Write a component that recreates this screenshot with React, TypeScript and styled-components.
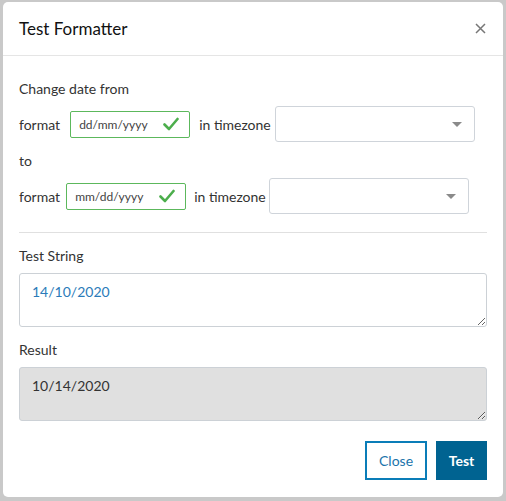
import React from "react";
import styled, { createGlobalStyle } from "styled-components";

const Global = createGlobalStyle`
  html, body { margin: 0; padding: 0; }
  body { font-family: Lato, "Open Sans", sans-serif; color: #333; background: #c9c9c9; }
  * { box-sizing: border-box; }
`;

const Backdrop = styled.div`
  width: 506px;
  height: 501px;
  background: #c9c9c9;
  padding: 2px 3px 4px 3px;
  overflow: hidden;
`;

const Modal = styled.div`
  width: 500px;
  height: 495px;
  background: #fff;
  border-radius: 5px;
  display: flex;
  flex-direction: column;
`;

const Header = styled.div`
  height: 54px;
  display: flex;
  align-items: center;
  justify-content: space-between;
  padding: 0 16px 0 16px;
  border-bottom: 1px solid #e5e5e5;
`;

const Title = styled.h4`
  margin: 0;
  font-size: 17px;
  font-weight: 400;
  color: #111;
`;

const CloseX = styled.button`
  border: 0;
  background: none;
  padding: 0;
  width: 14px;
  height: 14px;
  display: flex;
  align-items: center;
  justify-content: center;
  cursor: pointer;
`;

const Body = styled.div`
  padding: 23px 16px 0 16px;
  display: flex;
  flex-direction: column;
`;

const Text = styled.div<{ $mt?: number }>`
  font-size: 14px;
  line-height: 20px;
  margin-top: ${(p) => p.$mt ?? 0}px;
`;

const Row = styled.div<{ $mt: number }>`
  display: flex;
  align-items: center;
  height: 36px;
  margin-top: ${(p) => p.$mt}px;
  font-size: 14px;
`;

const Label = styled.span<{ $ml?: number }>`
  margin-left: ${(p) => p.$ml ?? 0}px;
  white-space: nowrap;
`;

const FormatInput = styled.div<{ $ml: number }>`
  margin-left: ${(p) => p.$ml}px;
  width: 120px;
  height: 27px;
  border: 1px solid #5cb85c;
  border-radius: 2px;
  display: flex;
  align-items: center;
  justify-content: space-between;
  padding: 0 10px 0 8px;
  font-size: 12px;
  color: #444;
`;

const Select = styled.div<{ $ml: number }>`
  margin-left: ${(p) => p.$ml}px;
  width: 200px;
  height: 36px;
  border: 1px solid #cfd4da;
  border-radius: 3px;
  display: flex;
  align-items: center;
  justify-content: flex-end;
  padding-right: 12px;
`;

const Caret = styled.span`
  width: 0;
  height: 0;
  border-left: 5px solid transparent;
  border-right: 5px solid transparent;
  border-top: 5px solid #8a8a8a;
`;

const Divider = styled.hr`
  margin: 18px 0 0 0;
  border: 0;
  border-top: 1px solid #e0e0e0;
  width: 468px;
`;

const Area = styled.textarea<{ $readOnly?: boolean }>`
  margin-top: 7px;
  width: 468px;
  height: 54px;
  border: 1px solid #ccd1d6;
  border-radius: 3px;
  padding: 8px 12px;
  font-family: Lato, sans-serif;
  font-size: 14px;
  line-height: 20px;
  color: ${(p) => (p.$readOnly ? "#333" : "#2b7bb9")};
  background: ${(p) => (p.$readOnly ? "#e0e0e0" : "#fff")};
  outline: none;
  display: block;
`;

const Footer = styled.div`
  display: flex;
  justify-content: flex-end;
  gap: 9px;
  padding: 20px 16px 0 0;
`;

const Button = styled.button<{ $primary?: boolean }>`
  height: 39px;
  padding: 0 12px;
  font-family: Lato, sans-serif;
  font-size: 14px;
  font-weight: ${(p) => (p.$primary ? 700 : 400)};
  border-radius: 0;
  cursor: pointer;
  border: ${(p) => (p.$primary ? "0" : "2px solid #0a7db8")};
  color: ${(p) => (p.$primary ? "#fff" : "#1a74ab")};
  background: ${(p) => (p.$primary ? "#006391" : "#fff")};
  width: ${(p) => (p.$primary ? 51 : 62)}px;
`;

const Check = () => (
  <svg width="16" height="14" viewBox="0 0 16 14">
    <path d="M1.5 7.5 L6 12 L14.5 2" fill="none" stroke="#4cae4c" strokeWidth="2.6" strokeLinecap="round" strokeLinejoin="round" />
  </svg>
);

export default function App() {
  return (
    <>
      <Global />
      <Backdrop>
        <Modal>
          <Header>
            <Title>Test Formatter</Title>
            <CloseX aria-label="Close">
              <svg width="11" height="11" viewBox="0 0 11 11">
                <path d="M1 1 L10 10 M10 1 L1 10" stroke="#777" strokeWidth="1.5" />
              </svg>
            </CloseX>
          </Header>
          <Body>
            <Text>Change date from</Text>
            <Row $mt={7}>
              <Label>format</Label>
              <FormatInput $ml={10}>
                <span>dd/mm/yyyy</span>
                <Check />
              </FormatInput>
              <Label $ml={9}>in timezone</Label>
              <Select $ml={4}>
                <Caret />
              </Select>
            </Row>
            <Text $mt={9}>to</Text>
            <Row $mt={7}>
              <Label>format</Label>
              <FormatInput $ml={6}>
                <span>mm/dd/yyyy</span>
                <Check />
              </FormatInput>
              <Label $ml={8}>in timezone</Label>
              <Select $ml={3}>
                <Caret />
              </Select>
            </Row>
            <Divider />
            <Text $mt={13}>Test String</Text>
            <Area defaultValue="14/10/2020" />
            <Text $mt={13}>Result</Text>
            <Area $readOnly readOnly defaultValue="10/14/2020" />
          </Body>
          <Footer>
            <Button>Close</Button>
            <Button $primary>Test</Button>
          </Footer>
        </Modal>
      </Backdrop>
    </>
  );
}
